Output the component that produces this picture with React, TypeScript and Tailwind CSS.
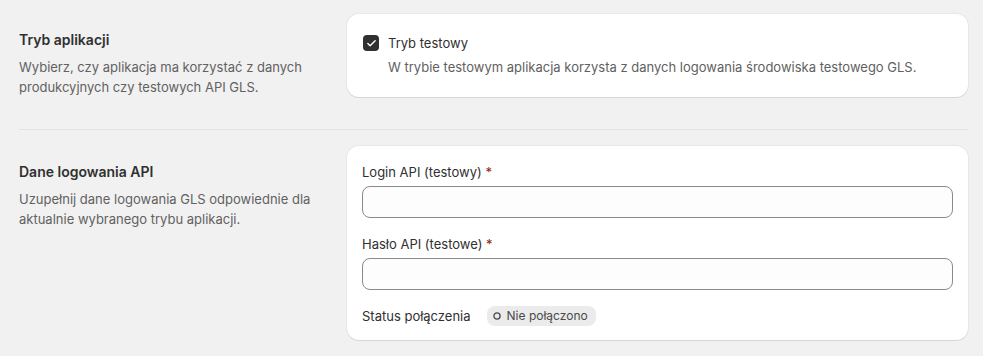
import { Check } from 'lucide-react';

function SectionIntro({ title, description }: { title: string; description: string }) {
  return (
    <div className="pt-4">
      <h2 className="text-[14px] font-semibold leading-5 text-[#303030]">{title}</h2>
      <p className="mt-[7px] text-[13px] leading-5 text-[#616161]">{description}</p>
    </div>
  );
}

function TextField({ label }: { label: string }) {
  return (
    <div>
      <label className="block text-[13px] leading-5 text-[#303030]">
        {label} <span className="text-[#8e1f0b]">*</span>
      </label>
      <input
        type="text"
        className="mt-1 block h-8 w-full rounded-lg border border-[#8a8a8a] bg-[#fdfdfd] px-3 text-[13px] outline-none"
      />
    </div>
  );
}

export default function App() {
  return (
    <div className="min-h-screen bg-[#f1f1f1] pl-[19px] pr-[15px] pt-[14px] font-['Inter',sans-serif] antialiased">
      {/* Tryb aplikacji */}
      <div className="grid grid-cols-[312px_1fr] gap-x-4">
        <SectionIntro
          title="Tryb aplikacji"
          description="Wybierz, czy aplikacja ma korzystać z danych produkcyjnych czy testowych API GLS."
        />
        <div className="rounded-xl bg-white px-4 py-[19px] shadow-[0_1px_0_0_rgba(26,26,26,0.08),0_0_0_1px_rgba(0,0,0,0.04)]">
          <div className="flex items-center gap-[9px]">
            <span className="flex h-4 w-4 items-center justify-center rounded-[4px] bg-[#303030]">
              <Check size={11} strokeWidth={3} className="text-white" />
            </span>
            <span className="text-[13px] leading-5 text-[#303030]">Tryb testowy</span>
          </div>
          <p className="mt-1 pl-[25px] text-[13px] leading-5 text-[#616161]">
            W trybie testowym aplikacja korzysta z danych logowania środowiska testowego GLS.
          </p>
        </div>
      </div>

      <div className="mt-8 h-px bg-[#e3e3e3]" />

      {/* Dane logowania API */}
      <div className="mt-4 grid grid-cols-[312px_1fr] gap-x-4">
        <SectionIntro
          title="Dane logowania API"
          description="Uzupełnij dane logowania GLS odpowiednie dla aktualnie wybranego trybu aplikacji."
        />
        <div className="flex flex-col gap-4 rounded-xl bg-white px-[15px] pb-[14px] pt-4 shadow-[0_1px_0_0_rgba(26,26,26,0.08),0_0_0_1px_rgba(0,0,0,0.04)]">
          <TextField label="Login API (testowy)" />
          <TextField label="Hasło API (testowe)" />
          <div className="flex items-center gap-4">
            <span className="text-[13px] leading-5 text-[#303030]">Status połączenia</span>
            <span className="flex h-5 items-center gap-[6px] rounded-lg bg-[#ebebeb] pl-[6px] pr-2 text-[12px] text-[#4a4a4a]">
              <svg width="8" height="8" viewBox="0 0 8 8" fill="none">
                <circle cx="4" cy="4" r="3.1" stroke="#4a4a4a" strokeWidth="1.3" />
              </svg>
              Nie połączono
            </span>
          </div>
        </div>
      </div>
    </div>
  );
}
